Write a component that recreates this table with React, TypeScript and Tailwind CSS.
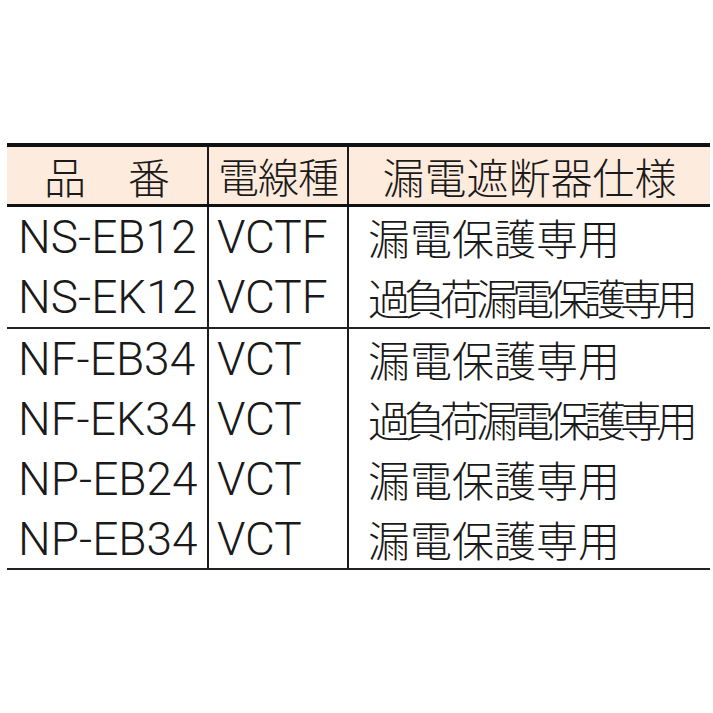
const latin = "font-['Roboto','Liberation_Sans',sans-serif] font-light";
const cjk = "font-['Noto_Sans_CJK_JP','Noto_Sans_CJK_SC',sans-serif] font-light";

const groups: { code: string; wire: string; spec: string }[][] = [
  [
    { code: "NS-EB12", wire: "VCTF", spec: "漏電保護専用" },
    { code: "NS-EK12", wire: "VCTF", spec: "過負荷漏電保護専用" },
  ],
  [
    { code: "NF-EB34", wire: "VCT", spec: "漏電保護専用" },
    { code: "NF-EK34", wire: "VCT", spec: "過負荷漏電保護専用" },
    { code: "NP-EB24", wire: "VCT", spec: "漏電保護専用" },
    { code: "NP-EB34", wire: "VCT", spec: "漏電保護専用" },
  ],
];

function Row({ code, wire, spec, h }: { code: string; wire: string; spec: string; h: string }) {
  const long = spec.length > 6;
  return (
    <div className={`grid grid-cols-[202px_140px_1fr] grid-rows-1 ${h}`}>
      <div className={`border-r-2 border-[#1a1a1a] pl-[11px] flex items-center leading-none ${latin} text-[46px] text-[#1a1a1a]`}>
        {code}
      </div>
      <div className={`border-r-2 border-[#1a1a1a] pl-[8px] flex items-center leading-none ${latin} text-[46px] text-[#1a1a1a]`}>
        {wire}
      </div>
      <div
        className={`pl-[19px] flex items-center leading-none ${cjk} text-[42px] text-[#1a1a1a] whitespace-nowrap ${
          long ? "tracking-[-6px]" : ""
        }`}
      >
        {spec}
      </div>
    </div>
  );
}

export default function App() {
  return (
    <div className="w-[713px] h-[713px] bg-white pt-[143px] pl-[7px]">
      <div className="w-[703px]">
        {/* header */}
        <div className="border-t-4 border-b-[3px] border-[#111] bg-[#fdebdd]">
          <div className="grid grid-cols-[202px_140px_1fr] grid-rows-1 h-[57px]">
            <div className={`border-r-2 border-[#1a1a1a] flex items-center justify-center leading-none ${cjk} text-[42px] text-[#1a1a1a]`}>
              品　番
            </div>
            <div className={`border-r-2 border-[#1a1a1a] flex items-center justify-center leading-none ${cjk} text-[41px] tracking-[-1px] text-[#1a1a1a]`}>
              電線種
            </div>
            <div className={`flex items-center justify-center leading-none ${cjk} text-[42px] text-[#1a1a1a]`}>
              漏電遮断器仕様
            </div>
          </div>
        </div>
        {/* body */}
        {groups.map((g, gi) => (
          <div key={gi} className="border-b-2 border-[#222]">
            {g.map((r, i) => (
              <Row key={r.code} {...r} h={gi === 1 && i === 3 ? "h-[59px]" : "h-[60px]"} />
            ))}
          </div>
        ))}
      </div>
    </div>
  );
}
